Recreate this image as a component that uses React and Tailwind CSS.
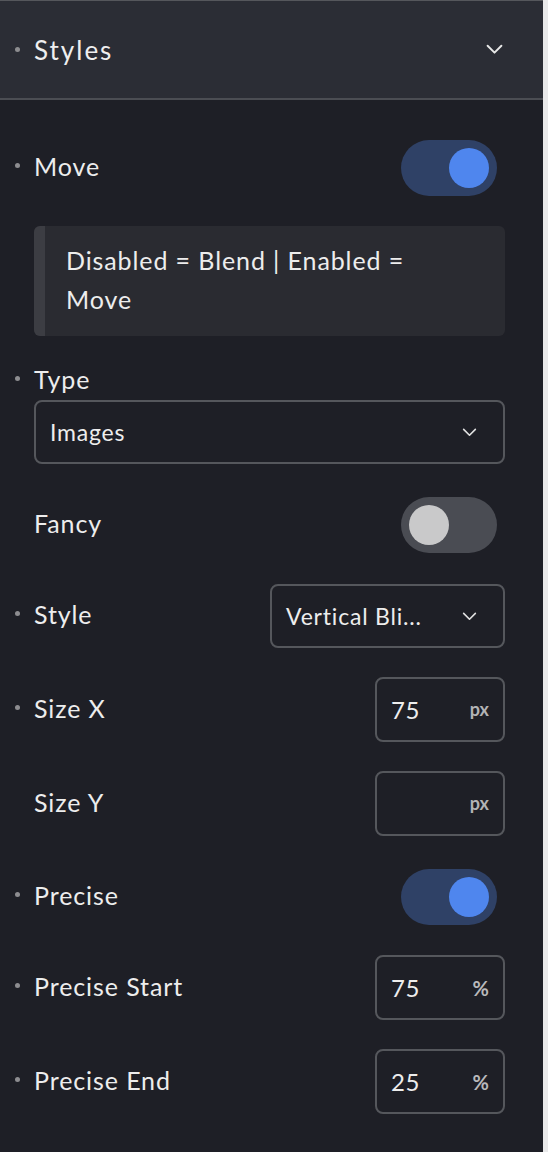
import React from "react";

const font = { fontFamily: "Lato, 'Noto Sans', sans-serif" };

function Chevron({ className = "" }) {
  return (
    <svg viewBox="0 0 16 10" className={className} fill="none" stroke="currentColor" strokeWidth="1.8" strokeLinecap="round" strokeLinejoin="round">
      <path d="M1.5 1.5 L8 8 L14.5 1.5" />
    </svg>
  );
}

function Label({ children, bullet = true }) {
  return (
    <div className="relative pb-[4px] text-[25px] leading-[32px] tracking-[0.9px] text-[#ededed]">
      {bullet && <span className="absolute left-[-19px] top-[13px] h-[5px] w-[5px] rounded-full bg-[#8d8d90]" />}
      {children}
    </div>
  );
}

function Toggle({ on }) {
  return on ? (
    <div className="flex h-[56px] w-[96px] items-center justify-end rounded-full bg-[#2f4166] pr-[8px]">
      <div className="h-[40px] w-[40px] rounded-full bg-[#4f86ee]" />
    </div>
  ) : (
    <div className="flex h-[56px] w-[96px] items-center justify-start rounded-full bg-[#4a4c53] pl-[8px]">
      <div className="h-[40px] w-[40px] rounded-full bg-[#c9c9ca]" />
    </div>
  );
}

function NumInput({ value, unit }) {
  return (
    <div className="flex h-[65px] w-[130px] items-center justify-between rounded-[8px] border-2 border-[#55575c] pl-[14px] pr-[14px]">
      <span className="text-[24px] tracking-[0.5px] text-[#ededed]">{value}</span>
      <span className={unit === "%" ? "text-[20px] font-bold text-[#b9b9bb]" : "text-[18px] font-bold text-[#b3b3b5]"}>{unit}</span>
    </div>
  );
}

export default function App() {
  return (
    <div className="flex h-[1152px] w-[548px] bg-[#e9e9ea]" style={font}>
      <div className="flex w-[543px] flex-col bg-[#1e1f26]">
        <div className="flex h-[100px] items-center justify-between border-t border-b-2 border-t-[#55575c] border-b-[#4b4d53] bg-[#2b2d35] pl-[34px] pr-[40px]">
          <div className="relative text-[26px] leading-[32px] tracking-[2px] text-[#efefef]">
            <span className="absolute left-[-19px] top-[13px] h-[5px] w-[5px] rounded-full bg-[#8d8d90]" />
            Styles
          </div>
          <Chevron className="h-[11px] w-[17px] text-[#e8e8e8]" />
        </div>

        <div className="flex flex-col pl-[34px] pr-[38px]">
          <div className="mt-[40px] flex items-center justify-between pr-[8px]">
            <Label>Move</Label>
            <Toggle on />
          </div>

          <div className="mt-[30px] flex rounded-[6px] bg-[#2a2b31]">
            <div className="w-[11px] rounded-l-[6px] bg-[#3c3d43]" />
            <div className="pb-[17px] pl-[21px] pr-[20px] pt-[15px] text-[25px] leading-[39px] tracking-[0.9px] text-[#ededed]">
              Disabled = Blend | Enabled =<br />Move
            </div>
          </div>

          <div className="mt-[27px]">
            <Label>Type</Label>
          </div>
          <div className="mt-[1px] flex h-[64px] items-center justify-between rounded-[8px] border-2 border-[#55575c] pl-[14px] pr-[26px]">
            <span className="text-[23px] tracking-[0.8px] text-[#ededed]">Images</span>
            <Chevron className="h-[9px] w-[15px] text-[#e0e0e0]" />
          </div>

          <div className="mt-[33px] flex items-center justify-between pr-[8px]">
            <Label bullet={false}>Fancy</Label>
            <Toggle on={false} />
          </div>

          <div className="mt-[31px] flex items-center justify-between">
            <Label>Style</Label>
            <div className="flex h-[64px] w-[235px] items-center justify-between rounded-[8px] border-2 border-[#55575c] pl-[14px] pr-[26px]">
              <span className="text-[23px] tracking-[0.8px] text-[#ededed]">Vertical Bli...</span>
              <Chevron className="h-[9px] w-[15px] text-[#e0e0e0]" />
            </div>
          </div>

          <div className="mt-[29px] flex items-center justify-between">
            <Label>Size X</Label>
            <NumInput value="75" unit="px" />
          </div>

          <div className="mt-[29px] flex items-center justify-between">
            <Label bullet={false}>Size Y</Label>
            <NumInput value="" unit="px" />
          </div>

          <div className="mt-[33px] flex items-center justify-between pr-[8px]">
            <Label>Precise</Label>
            <Toggle on />
          </div>

          <div className="mt-[30px] flex items-center justify-between">
            <Label>Precise Start</Label>
            <NumInput value="75" unit="%" />
          </div>

          <div className="mt-[29px] flex items-center justify-between">
            <Label>Precise End</Label>
            <NumInput value="25" unit="%" />
          </div>
        </div>
      </div>
    </div>
  );
}
